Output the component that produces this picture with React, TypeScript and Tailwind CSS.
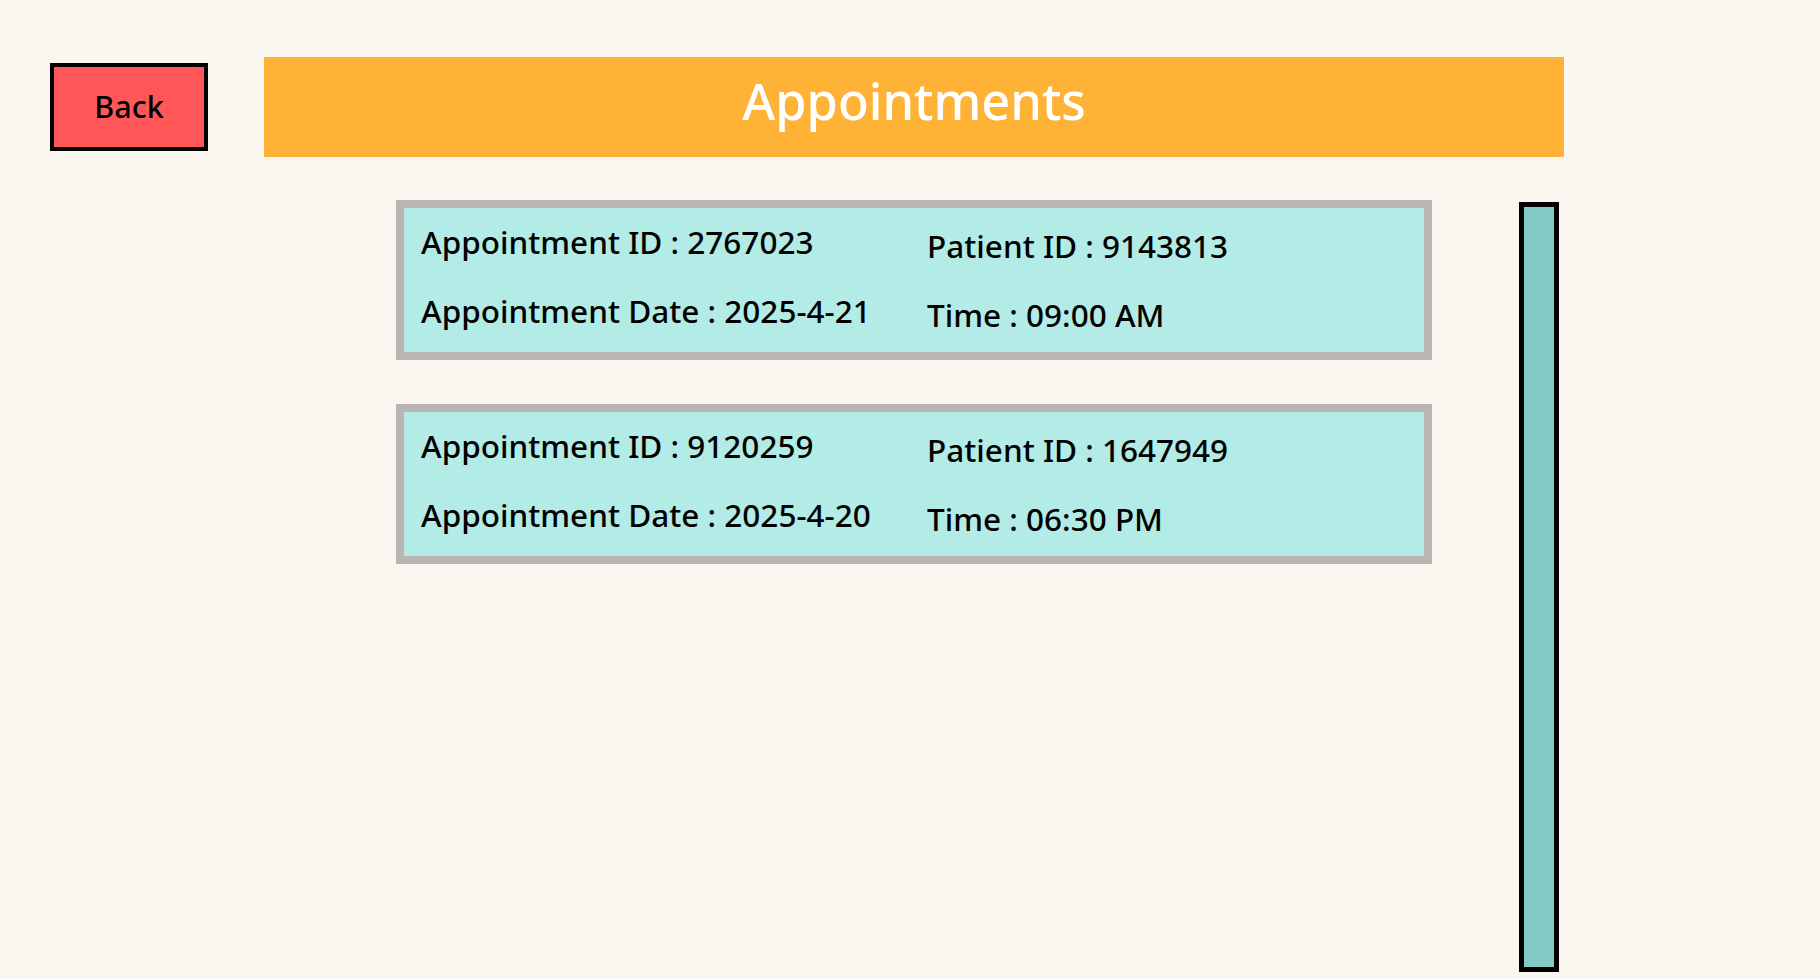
const appointments = [
  { id: "2767023", patient: "9143813", date: "2025-4-21", time: "09:00 AM" },
  { id: "9120259", patient: "1647949", date: "2025-4-20", time: "06:30 PM" },
];

function AppointmentCard({ a }: { a: (typeof appointments)[number] }) {
  return (
    <div className="flex h-[160px] w-[1036px] border-[8px] border-[#b9b5b3] bg-[#b3ebe6] text-[31.5px] font-medium text-black">
      <div className="flex w-[523px] flex-col gap-[26px] pl-[17px] pt-[12px]">
        <p className="leading-[43px]">Appointment ID : {a.id}</p>
        <p className="leading-[43px]">Appointment Date : {a.date}</p>
      </div>
      <div className="flex flex-col gap-[26px] pt-[16px]">
        <p className="leading-[43px]">Patient ID : {a.patient}</p>
        <p className="leading-[43px]">Time : {a.time}</p>
      </div>
    </div>
  );
}

export default function App() {
  return (
    <main
      className="flex h-[979px] w-full flex-col overflow-hidden bg-[#faf7f0]"
      style={{ fontFamily: '"Noto Sans", "Open Sans", sans-serif' }}
    >
      <div className="flex items-start pl-[50px] pt-[57px]">
        <button className="mt-[6px] flex h-[88px] w-[158px] items-center justify-center border-4 border-black bg-[#ff5757] text-[30.5px] font-medium text-black">
          Back
        </button>
        <div className="ml-[56px] flex h-[100px] w-[1300px] justify-center bg-[#ffb336] pt-[9px]">
          <h1 className="text-[50.5px] leading-[69px] font-medium text-white">Appointments</h1>
        </div>
      </div>

      <div className="flex items-start pl-[396px] pt-[43px]">
        <div className="flex flex-col gap-[44px]">
          {appointments.map((a) => (
            <AppointmentCard key={a.id} a={a} />
          ))}
        </div>
        <div className="ml-[87px] mt-[2px] h-[770px] w-[40px] border-[5px] border-black bg-[#83cbc4]" />
      </div>
    </main>
  );
}
